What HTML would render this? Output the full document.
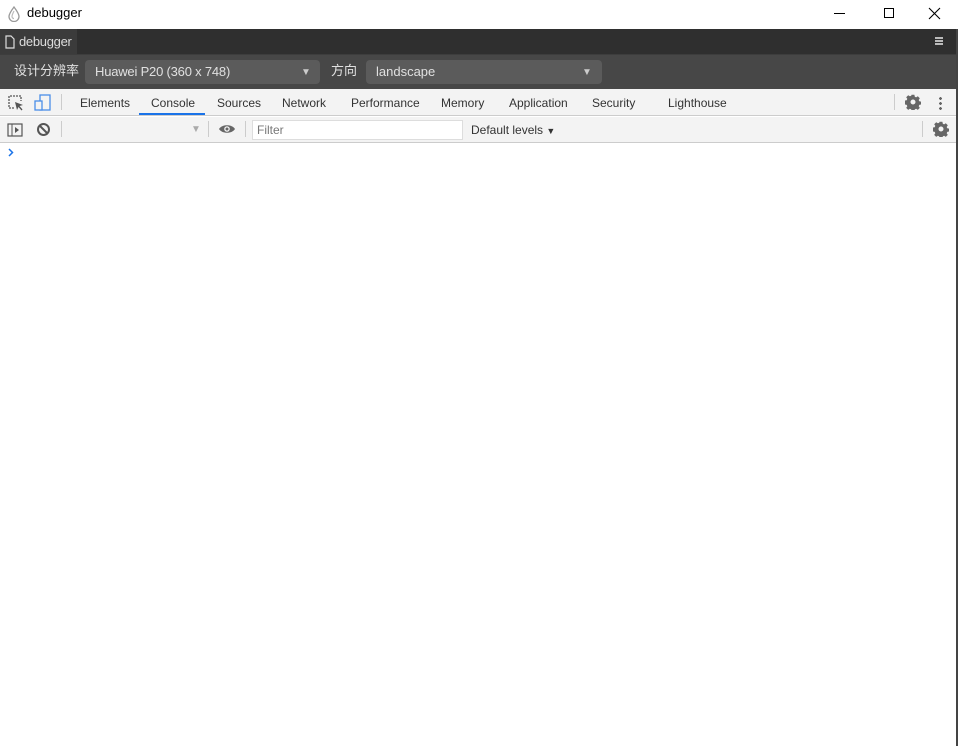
<!DOCTYPE html>
<html><head><meta charset="utf-8"><style>
*{margin:0;padding:0;box-sizing:border-box}
body{width:958px;height:746px;background:#fff;font-family:"Liberation Sans","Noto Sans CJK SC",sans-serif;position:relative;overflow:hidden}
.a{position:absolute;line-height:16px;white-space:nowrap}
.t{font-size:12px;color:#333;top:95px}
</style></head><body>
<div class="a" style="left:0;top:0;width:958px;height:29px;background:#fff"></div>
<svg class="a" style="left:7px;top:6px" width="14" height="16"><path d="M7 1 C4 5 2 8 2 10.5 A5 5 0 0 0 12 10.5 C12 8 10 5 7 1Z" fill="none" stroke="#999" stroke-width="1.3"/><path d="M7 5 C5.5 8 5 9 5 10.5 A2 2 0 0 0 7 12.5" fill="none" stroke="#bbb" stroke-width="1.2"/></svg>
<div class="a" style="left:27px;top:5px;font-size:13px;color:#000">debugger</div>
<div class="a" style="left:834px;top:13px;width:11px;height:1px;background:#000"></div>
<div class="a" style="left:884px;top:8px;width:10px;height:10px;border:1px solid #000"></div>
<svg class="a" style="left:928px;top:7px" width="13" height="13"><path d="M1 1L12 12M12 1L1 12" stroke="#000" stroke-width="1.1"/></svg>
<div class="a" style="left:0;top:29px;width:958px;height:26px;background:#2f2f2f;border-bottom:1px solid #3d3d3d"></div>
<div class="a" style="left:0;top:29px;width:77px;height:25px;background:#3b3b3b"></div>
<svg class="a" style="left:5px;top:35px" width="10" height="14"><path d="M1 1H6L9 4V13H1Z" fill="none" stroke="#ddd" stroke-width="1.2"/></svg>
<div class="a" style="left:19px;top:34px;font-size:13px;color:#ddd;letter-spacing:-0.3px">debugger</div>
<div class="a" style="left:935px;top:37px;width:8px;height:8px;border-top:2px solid #bbb;border-bottom:2px solid #bbb"><div style="margin-top:1px;height:2px;background:#bbb"></div></div>
<div class="a" style="left:0;top:55px;width:958px;height:34px;background:#474747"></div>
<div class="a" style="left:14px;top:63px;font-size:13px;color:#e0e0e0;line-height:16px">设计分辨率</div>
<div class="a" style="left:85px;top:60px;width:235px;height:24px;background:#5b5b5b;border-radius:4px"></div>
<div class="a" style="left:95px;top:64px;font-size:13px;color:#e0e0e0;letter-spacing:-0.2px">Huawei P20 (360 x 748)</div>
<div class="a" style="left:301px;top:65px;font-size:10px;color:#ccc">▼</div>
<div class="a" style="left:331px;top:63px;font-size:13px;color:#e0e0e0">方向</div>
<div class="a" style="left:366px;top:60px;width:236px;height:24px;background:#5b5b5b;border-radius:4px"></div>
<div class="a" style="left:376px;top:64px;font-size:13px;color:#e0e0e0">landscape</div>
<div class="a" style="left:582px;top:65px;font-size:10px;color:#ccc">▼</div>
<div class="a" style="left:0;top:89px;width:957px;height:27px;background:#f3f3f3;border-bottom:1px solid #ccc"></div>
<svg class="a" style="left:8px;top:95px" width="16" height="16"><path d="M6 13H1V1H13V6" fill="none" stroke="#555" stroke-width="1.3" stroke-dasharray="2 1"/><path d="M7 7L15 10L11.5 11L14.5 14.5L13.5 15.5L10.5 12L9 15Z" fill="#555"/></svg>
<svg class="a" style="left:34px;top:94px" width="17" height="17"><rect x="6" y="1" width="10" height="15" fill="none" stroke="#4a8ee8" stroke-width="1.3"/><rect x="1" y="7" width="7" height="9" fill="#f3f3f3" stroke="#4a8ee8" stroke-width="1.3"/></svg>
<div class="a" style="left:61px;top:94px;width:1px;height:16px;background:#ccc"></div>
<div class="a t" style="left:80px">Elements</div>
<div class="a t" style="left:151px">Console</div>
<div class="a" style="left:139px;top:113px;width:66px;height:2px;background:#1a73e8"></div>
<div class="a t" style="left:217px">Sources</div>
<div class="a t" style="left:282px">Network</div>
<div class="a t" style="left:351px">Performance</div>
<div class="a t" style="left:441px">Memory</div>
<div class="a t" style="left:509px">Application</div>
<div class="a t" style="left:592px">Security</div>
<div class="a t" style="left:668px">Lighthouse</div>
<div class="a" style="left:894px;top:94px;width:1px;height:16px;background:#ccc"></div>
<svg class="a" style="left:905px;top:94px" width="16" height="16" viewBox="0 0 16 16"><path fill="#666" fill-rule="evenodd" d="M6.6 0.8h2.8l.4 2 1.3.6 1.7-1.1 2 2-1.1 1.7.6 1.3 2 .4v2.8l-2 .4-.6 1.3 1.1 1.7-2 2-1.7-1.1-1.3.6-.4 2H6.6l-.4-2-1.3-.6-1.7 1.1-2-2 1.1-1.7-.6-1.3-2-.4V6.6l2-.4.6-1.3-1.1-1.7 2-2 1.7 1.1 1.3-.6zM8 5.5a2.5 2.5 0 1 0 0 5 2.5 2.5 0 1 0 0-5z"/></svg>
<div class="a" style="left:939px;top:96px;width:3px;height:14px;background:radial-gradient(circle,#666 1.3px,transparent 1.5px) 0 0/3px 5px"></div>
<div class="a" style="left:0;top:117px;width:957px;height:26px;background:#f3f3f3;border-bottom:1px solid #ccc"></div>
<svg class="a" style="left:7px;top:122px" width="16" height="16"><rect x="1" y="2" width="14" height="12" fill="none" stroke="#555" stroke-width="1.2"/><path d="M5 2V14" stroke="#555"/><path d="M8 5L12 8L8 11Z" fill="#555"/></svg>
<svg class="a" style="left:36px;top:122px" width="15" height="15"><circle cx="7.5" cy="7.5" r="5.5" fill="none" stroke="#555" stroke-width="2"/><path d="M3.5 3.5L11.5 11.5" stroke="#555" stroke-width="2"/></svg>
<div class="a" style="left:61px;top:121px;width:1px;height:16px;background:#ccc"></div>
<div class="a" style="left:191px;top:122px;font-size:10px;color:#aaa">▼</div>
<div class="a" style="left:208px;top:121px;width:1px;height:16px;background:#ccc"></div>
<svg class="a" style="left:218px;top:123px" width="18" height="12"><path d="M1 6C4 1 14 1 17 6C14 11 4 11 1 6Z" fill="#666"/><circle cx="9" cy="6" r="2.8" fill="#f3f3f3"/><circle cx="9" cy="6" r="1.5" fill="#666"/></svg>
<div class="a" style="left:245px;top:121px;width:1px;height:16px;background:#ccc"></div>
<div class="a" style="left:252px;top:120px;width:211px;height:20px;background:#fff;border:1px solid #ddd"></div>
<div class="a" style="left:257px;top:122px;font-size:12px;color:#777">Filter</div>
<div class="a" style="left:471px;top:122px;font-size:12px;color:#333">Default levels <span style="font-size:9px">▼</span></div>
<div class="a" style="left:922px;top:121px;width:1px;height:16px;background:#ccc"></div>
<svg class="a" style="left:933px;top:121px" width="16" height="16" viewBox="0 0 16 16"><path fill="#666" fill-rule="evenodd" d="M6.6 0.8h2.8l.4 2 1.3.6 1.7-1.1 2 2-1.1 1.7.6 1.3 2 .4v2.8l-2 .4-.6 1.3 1.1 1.7-2 2-1.7-1.1-1.3.6-.4 2H6.6l-.4-2-1.3-.6-1.7 1.1-2-2 1.1-1.7-.6-1.3-2-.4V6.6l2-.4.6-1.3-1.1-1.7 2-2 1.7 1.1 1.3-.6zM8 5.5a2.5 2.5 0 1 0 0 5 2.5 2.5 0 1 0 0-5z"/></svg>
<svg class="a" style="left:8px;top:148px" width="6" height="9"><path d="M1 1L4.5 4.5L1 8" fill="none" stroke="#1a73e8" stroke-width="1.5"/></svg>
<div class="a" style="left:956px;top:29px;width:2px;height:717px;background:#444"></div>
</body></html>
